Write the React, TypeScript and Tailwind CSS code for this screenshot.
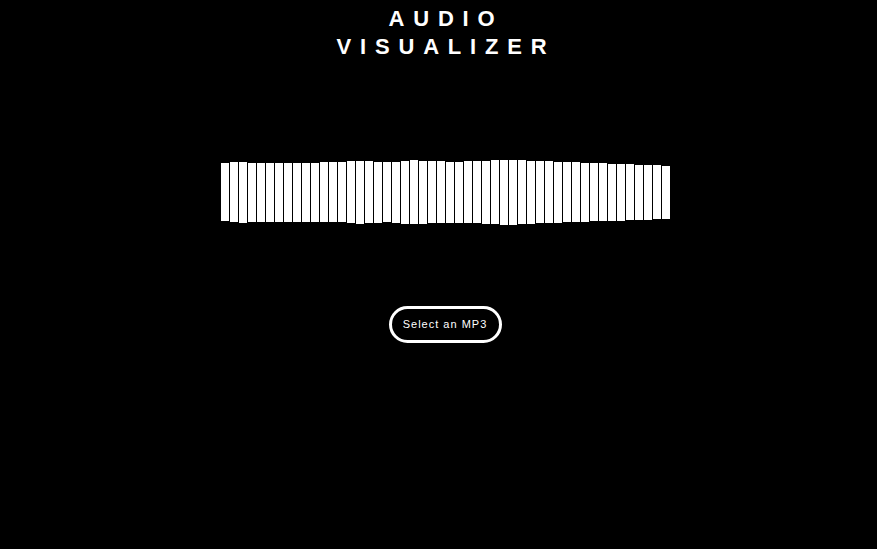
import React from "react";

const heights = [
  58, 60, 61, 59, 59, 59, 59, 59, 59, 59, 59, 60, 60, 60, 62, 63, 62, 61, 60, 61,
  63, 64, 63, 62, 62, 61, 61, 62, 62, 63, 64, 65, 65, 64, 63, 62, 62, 61, 60, 60,
  59, 58, 58, 57, 57, 56, 55, 55, 54, 53,
];

export default function App() {
  return (
    <div
      className="w-full h-[549px] bg-black flex flex-col items-center pl-[13px] overflow-hidden"
      style={{ fontFamily: '"Liberation Sans", Arial, sans-serif' }}
    >
      <h1 className="mt-[5px] text-white font-bold text-[22px] leading-[28px] tracking-[0.4em] pl-[2px] text-center">
        <div>AUDIO</div>
        <div>VISUALIZER</div>
      </h1>
      <div className="mt-[98px] h-[66px] flex items-center gap-[1px]">
        {heights.map((h, i) => (
          <div key={i} className="w-[8px] bg-white" style={{ height: `${h}px` }} />
        ))}
      </div>
      <button className="mt-[81px] w-[113px] h-[37px] rounded-full border-[3px] border-white bg-black text-white text-[11px] tracking-[1px] flex items-center justify-center">
        Select an MP3
      </button>
    </div>
  );
}
